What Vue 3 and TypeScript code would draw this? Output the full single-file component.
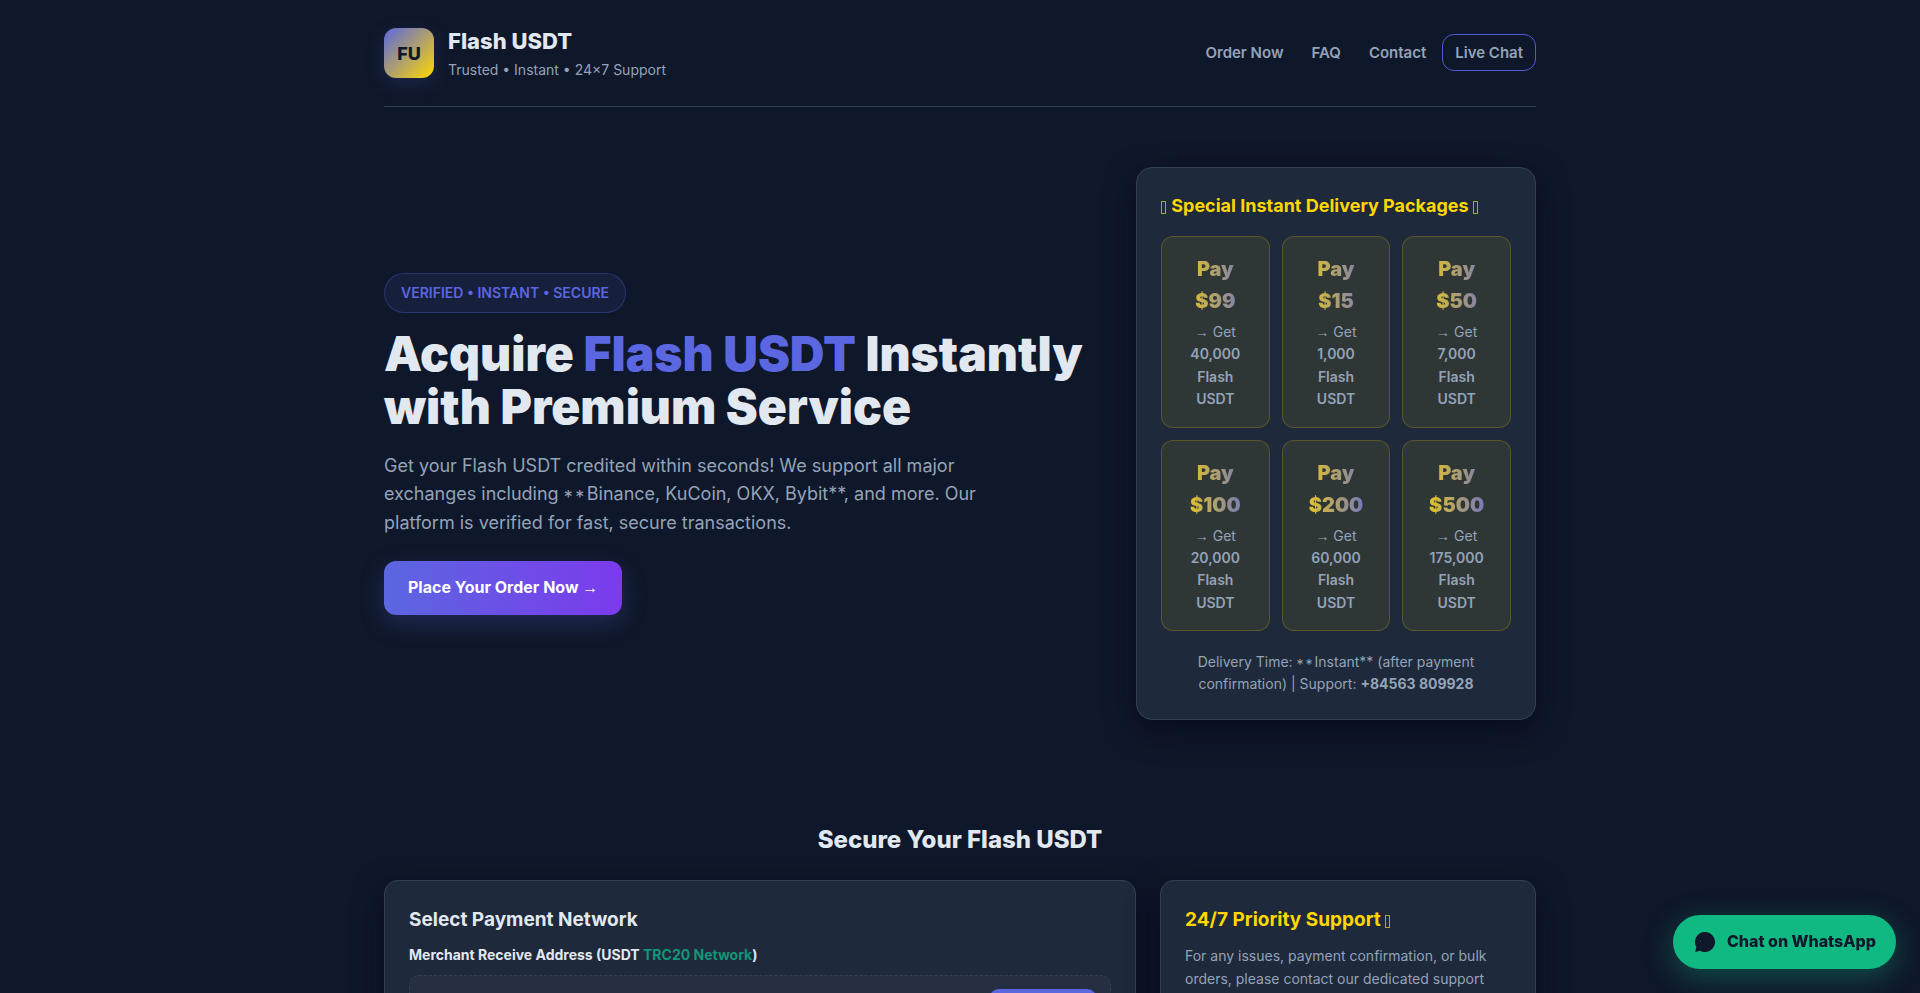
<script setup lang="ts">
interface Pack {
  pay: string
  amount: string
}

const packs: Pack[] = [
  { pay: '$99', amount: '40,000' },
  { pay: '$15', amount: '1,000' },
  { pay: '$50', amount: '7,000' },
  { pay: '$100', amount: '20,000' },
  { pay: '$200', amount: '60,000' },
  { pay: '$500', amount: '175,000' },
]
</script>

<template>
  <div class="page">
    <header class="topbar">
      <div class="brand">
        <div class="logo">FU</div>
        <div>
          <div class="brand-name">Flash USDT</div>
          <div class="brand-sub">Trusted • Instant • 24×7 Support</div>
        </div>
      </div>
      <nav class="nav">
        <a class="nav-link">Order Now</a>
        <a class="nav-link">FAQ</a>
        <a class="nav-link">Contact</a>
        <a class="nav-link nav-chat">Live Chat</a>
      </nav>
    </header>

    <section class="hero">
      <div class="hero-left">
        <div class="pill">VERIFIED • INSTANT • SECURE</div>
        <h1>Acquire <span class="accent">Flash USDT</span> Instantly with Premium Service</h1>
        <p class="lead">
          Get your Flash USDT credited within seconds! We support all major exchanges including
          <span class="stars">**</span>Binance, KuCoin, OKX, Bybit**, and more. Our platform is
          verified for fast, secure transactions.
        </p>
        <button class="cta">Place Your Order Now <span class="arrow">→</span></button>
      </div>

      <aside class="offer">
        <h3 class="offer-title">
          <i class="tofu"></i> Special Instant Delivery Packages <i class="tofu"></i>
        </h3>
        <div class="pack-grid">
          <div v-for="p in packs" :key="p.pay" class="pack">
            <div class="pack-price">Pay<br />{{ p.pay }}</div>
            <div class="pack-get"><span class="arrow">→</span> Get</div>
            <div class="pack-amount">{{ p.amount }}<br />Flash<br />USDT</div>
          </div>
        </div>
        <p class="offer-note">
          Delivery Time: <span class="stars">**</span>Instant** (after payment confirmation) |
          Support: <strong>+84563 809928</strong>
        </p>
      </aside>
    </section>

    <h2 class="section-title">Secure Your Flash USDT</h2>

    <section class="order">
      <div class="card">
        <h3 class="card-title">Select Payment Network</h3>
        <div class="addr-label">
          Merchant Receive Address (USDT <span class="green">TRC20 Network</span>)
        </div>
        <div class="addr-box">
          <code class="addr">Loading address…</code>
          <button class="copy">Copy</button>
        </div>
      </div>
      <div class="card">
        <h3 class="card-title gold">24/7 Priority Support <i class="tofu"></i></h3>
        <p class="support-text">
          For any issues, payment confirmation, or bulk orders, please contact our dedicated support
          team.
        </p>
      </div>
    </section>

    <a class="wa">
      <svg class="wa-icon" viewBox="0 0 24 24" width="24" height="24" aria-hidden="true">
        <path
          d="M12 2a10 10 0 0 0-8.6 15.1L2.2 21.9l4.9-1.2A10 10 0 1 0 12 2z"
          fill="currentColor"
        />
        <circle cx="7.6" cy="11" r="0.5" fill="#10b981" />
      </svg>
      <span>Chat on WhatsApp</span>
    </a>
  </div>
</template>

<style>
html,
body {
  margin: 0;
  background: #0f172a;
}
</style>

<style scoped>
.page {
  box-sizing: border-box;
  max-width: 1200px;
  margin: 0 auto;
  padding: 0 24px 40px;
  font-family: Inter, 'Liberation Sans', sans-serif;
  color: #e2e8f0;
}

.topbar {
  display: flex;
  align-items: center;
  justify-content: space-between;
  height: 106px;
  border-bottom: 1px solid #334155;
}

.brand {
  display: flex;
  align-items: center;
  gap: 14px;
}

.logo {
  width: 50px;
  height: 50px;
  border-radius: 12px;
  background: linear-gradient(135deg, #5b67e0, #ffd700);
  box-shadow: 0 6px 20px rgba(91, 103, 224, 0.18);
  display: flex;
  align-items: center;
  justify-content: center;
  font-size: 18px;
  font-weight: 800;
  color: #0f172a;
}

.brand-name {
  font-size: 22px;
  font-weight: 800;
  line-height: 26px;
}

.brand-sub {
  margin-top: 7px;
  font-size: 14px;
  line-height: 18px;
  color: #94a3b8;
}

.nav {
  display: flex;
  align-items: center;
  gap: 4px;
  margin-top: -1px;
}

.nav-link {
  padding: 6px 12px;
  font-size: 15px;
  font-weight: 600;
  line-height: 23px;
  color: #94a3b8;
}

.nav-chat {
  border: 1px solid #4f5bd5;
  border-radius: 12px;
}

.hero {
  display: grid;
  grid-template-columns: 1fr 400px;
  gap: 24px;
  align-items: center;
  padding-top: 60px;
}

.pill {
  display: inline-block;
  padding: 8px 16px;
  font-size: 14px;
  font-weight: 600;
  line-height: 22.4px;
  color: #5b67e0;
  background: rgba(91, 103, 224, 0.1);
  border: 1px solid rgba(91, 103, 224, 0.3);
  border-radius: 999px;
}

h1 {
  margin: 15px 0 0;
  font-size: 48px;
  font-weight: 900;
  line-height: 52.8px;
  color: #e2e8f0;
}

.accent {
  color: #5b67e0;
}

.lead {
  margin: 18px 0 0;
  max-width: 600px;
  font-size: 18px;
  line-height: 28.8px;
  color: #94a3b8;
}

.stars {
  display: inline-block;
  letter-spacing: 0.14em;
  transform: translateY(0.2em);
}

.arrow {
  font-family: 'Liberation Sans', sans-serif;
  font-weight: 400;
}

.cta {
  display: block;
  margin-top: 23px;
  padding: 14px 24px;
  border: 0;
  border-radius: 12px;
  font-family: inherit;
  font-size: 16px;
  font-weight: 700;
  line-height: 25.6px;
  color: #fff;
  background: linear-gradient(90deg, #5b67e0, #7c3aed);
  box-shadow: 0 8px 24px rgba(91, 103, 224, 0.25);
}

.offer {
  box-sizing: border-box;
  padding: 24px;
  background: #1e293b;
  border: 1px solid #334155;
  border-radius: 16px;
  box-shadow: 0 10px 30px rgba(2, 6, 23, 0.6);
}

.offer-title {
  margin: 0;
  font-size: 18px;
  font-weight: 700;
  line-height: 28px;
  color: #ffd700;
}

/* missing-emoji box, the font has no glyph for these in the reference */
.tofu {
  display: inline-block;
  box-sizing: border-box;
  width: 5px;
  height: 13px;
  margin-right: 1px;
  vertical-align: -1.5px;
  border: 1px solid rgba(255, 215, 0, 0.7);
}

.pack-grid {
  display: grid;
  grid-template-columns: repeat(3, 1fr);
  gap: 12px;
  margin-top: 16px;
}

.pack {
  padding: 16px 12px;
  text-align: center;
  background: rgba(255, 215, 0, 0.08);
  border: 1px solid rgba(255, 215, 0, 0.2);
  border-radius: 12px;
}

.pack-price {
  font-size: 20px;
  font-weight: 900;
  line-height: 32px;
  background: linear-gradient(90deg, #ffd700, #5b67e0);
  -webkit-background-clip: text;
  background-clip: text;
  color: transparent;
}

.pack-get {
  margin-top: 4px;
  font-size: 14px;
  line-height: 22.4px;
  color: #94a3b8;
}

.pack-amount {
  font-size: 14px;
  font-weight: 600;
  line-height: 22.4px;
  color: #94a3b8;
}

.offer-note {
  margin: 20px 0 0;
  text-align: center;
  font-size: 14px;
  line-height: 22px;
  color: #94a3b8;
}

.offer-note strong {
  font-weight: 700;
}

.section-title {
  margin: 105px 0 0;
  text-align: center;
  font-size: 24px;
  font-weight: 800;
  line-height: 30px;
  color: #e2e8f0;
}

.order {
  display: grid;
  grid-template-columns: 2fr 1fr;
  gap: 24px;
  margin-top: 25px;
}

.card {
  padding: 24px;
  background: #1e293b;
  border: 1px solid #334155;
  border-radius: 14px;
  box-shadow: 0 10px 30px rgba(2, 6, 23, 0.6);
}

.card-title {
  margin: 0;
  font-size: 19px;
  font-weight: 700;
  line-height: 29px;
  color: #e2e8f0;
}

.gold {
  color: #ffd700;
}

.addr-label {
  margin-top: 10px;
  font-size: 14px;
  font-weight: 700;
  line-height: 22.4px;
  color: #e2e8f0;
}

.green {
  color: #109678;
}

.addr-box {
  display: flex;
  align-items: center;
  justify-content: space-between;
  margin-top: 8px;
  padding: 13px;
  background: rgba(255, 255, 255, 0.03);
  border: 1px dashed #334155;
  border-radius: 10px;
}

.addr {
  font-size: 14px;
  color: #e2e8f0;
}

.copy {
  width: 108px;
  height: 40px;
  border: 0;
  border-radius: 10px;
  background: #5b67e0;
  color: #fff;
  font-family: inherit;
  font-weight: 600;
}

.support-text {
  margin: 11px 0 0;
  font-size: 14px;
  line-height: 22.4px;
  color: #94a3b8;
}

.wa {
  position: fixed;
  right: 24px;
  bottom: 24px;
  display: flex;
  align-items: center;
  gap: 10px;
  padding: 14px 20px;
  border-radius: 50px;
  background: #10b981;
  color: #0f172a;
  font-size: 16px;
  font-weight: 800;
  line-height: 25.6px;
  box-shadow: 0 8px 30px rgba(16, 185, 129, 0.35);
}

.wa-icon {
  display: block;
}
</style>
